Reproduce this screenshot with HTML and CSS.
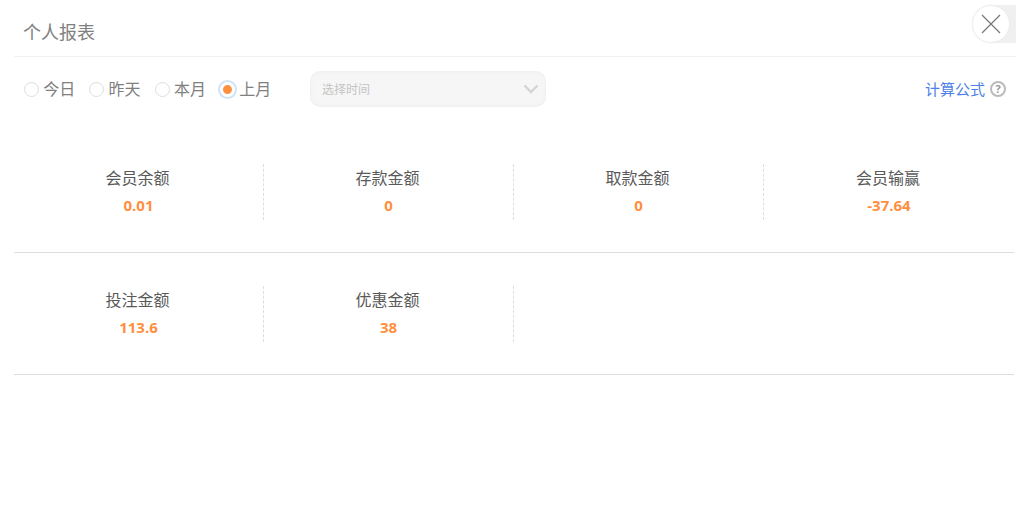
FILE: index.html
```html
<!DOCTYPE html>
<html lang="zh-CN">
<head>
    <meta charset="UTF-8">
    <title>个人报表</title>
    <link rel="stylesheet" href="styles.css">
</head>
<body>
    <div class="report">
        <div class="report-header">
            <h1 class="report-title">个人报表</h1>
            <div class="close-tab">
                <div class="close-btn">
                    <svg width="20" height="20" viewBox="0 0 20 20"><path d="M1 1L19 19M19 1L1 19" stroke="#777" stroke-width="1.2" fill="none"/></svg>
                </div>
            </div>
        </div>

        <div class="toolbar">
            <div class="radio-group">
                <label class="radio"><span class="radio-dot"></span>今日</label>
                <label class="radio"><span class="radio-dot"></span>昨天</label>
                <label class="radio"><span class="radio-dot"></span>本月</label>
                <label class="radio checked"><span class="radio-dot"></span>上月</label>
            </div>
            <div class="time-select">
                <span>选择时间</span>
                <svg width="16" height="10" viewBox="0 0 16 10"><path d="M1.5 1.5L8 8L14.5 1.5" stroke="#d4d4d4" stroke-width="2.4" fill="none"/></svg>
            </div>
            <a class="formula">计算公式<span class="help">?</span></a>
        </div>

        <div class="stat-row">
            <div class="stat-box">
                <div class="stat-label">会员余额</div>
                <div class="stat-value">0.01</div>
            </div>
            <div class="stat-box">
                <div class="stat-label">存款金额</div>
                <div class="stat-value">0</div>
            </div>
            <div class="stat-box">
                <div class="stat-label">取款金额</div>
                <div class="stat-value">0</div>
            </div>
            <div class="stat-box">
                <div class="stat-label">会员输赢</div>
                <div class="stat-value">-37.64</div>
            </div>
        </div>

        <div class="stat-row">
            <div class="stat-box">
                <div class="stat-label">投注金额</div>
                <div class="stat-value">113.6</div>
            </div>
            <div class="stat-box">
                <div class="stat-label">优惠金额</div>
                <div class="stat-value">38</div>
            </div>
        </div>
    </div>
</body>
</html>
```

FILE: styles.css
```css
* {
    margin: 0;
    padding: 0;
    box-sizing: border-box;
    font-family: "Open Sans", "Noto Sans CJK SC", sans-serif;
}

body {
    background: #fff;
    color: #666;
    width: 1016px;
    height: 521px;
    overflow: hidden;
}

.report {
    padding-left: 14px;
}

.report-header {
    height: 57px;
    display: flex;
    justify-content: space-between;
    border-bottom: 1px solid #f2f2f2;
    padding-left: 9px;
}

.report-title {
    font-size: 18px;
    font-weight: normal;
    color: #808080;
    line-height: 24px;
    margin-top: 20px;
}

.close-tab {
    width: 44px;
    height: 38px;
    margin-top: 5px;
    display: flex;
    background: linear-gradient(to right, #fff 0, #fff 20px, #f0f0f0 20px);
}

.close-btn {
    width: 38px;
    height: 38px;
    border-radius: 50%;
    background: #fff;
    border: 1px solid #eee;
    box-shadow: 0 0 2px #eee;
    display: flex;
    align-items: center;
    justify-content: center;
}

.toolbar {
    height: 50px;
    display: flex;
    align-items: center;
    padding-left: 10px;
    padding-right: 10px;
    margin-top: 7px;
}

.radio-group {
    display: flex;
    gap: 14px;
    width: 286px;
}

.radio {
    display: flex;
    align-items: center;
    gap: 4.3px;
    font-size: 16px;
    color: #808080;
    line-height: 22px;
}

.radio-dot {
    width: 15px;
    height: 15px;
    border-radius: 50%;
    border: 1px solid #ddd;
    background: #fff;
}

.radio.checked .radio-dot {
    border: 3px solid #fff;
    background: #ff8f40;
    box-shadow: 0 0 0 2px #cfe3f7;
}

.time-select {
    width: 236px;
    height: 36px;
    border-radius: 10px;
    background: #f6f6f6;
    display: flex;
    align-items: center;
    justify-content: space-between;
    padding: 0 7px 0 12px;
    font-size: 12px;
    color: #c4c4c4;
    box-shadow: inset 0 0 4px #ececec;
}

.formula {
    margin-left: auto;
    display: flex;
    align-items: center;
    gap: 5px;
    font-size: 15px;
    color: #4d7fe8;
    margin-top: -1px;
}

.help {
    width: 16px;
    height: 16px;
    border-radius: 50%;
    border: 2px solid #bbb;
    color: #999;
    font-size: 11px;
    font-weight: bold;
    line-height: 12px;
    text-align: center;
}

.stat-row {
    display: flex;
    height: 122px;
    width: 1000px;
    padding-top: 33px;
    border-bottom: 1px solid #ddd;
}

.toolbar + .stat-row {
    margin-top: 17px;
}

.stat-box {
    width: 250px;
    height: 56px;
    text-align: center;
    border-right: 1px dashed #ddd;
}

.stat-box:nth-child(4) {
    border-right: none;
}

.stat-label {
    font-size: 16px;
    line-height: 22px;
    margin-top: 3px;
    padding-right: 2px;
    color: #595959;
}

.stat-value {
    font-size: 15px;
    font-weight: bold;
    line-height: 20px;
    margin-top: 6px;
    color: #ff8f40;
}
```
